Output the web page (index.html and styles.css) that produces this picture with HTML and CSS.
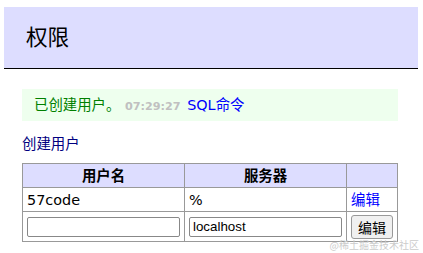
FILE: index.html
```
<!DOCTYPE html>
<html lang="zh">
<head>
    <meta charset="UTF-8">
    <meta name="viewport" content="width=device-width, initial-scale=1.0">
    <title>权限</title>
    <link rel="stylesheet" href="styles.css">
</head>
<body>

<div id="content">
    <h2>权限</h2>

    <div class="message">已创建用户。 <span class="time">07:29:27</span> <a href="#" class="sql">SQL命令</a></div>

    <p class="links"><a href="#" class="visited">创建用户</a></p>

    <form action="" method="get">
        <table>
            <thead>
                <tr>
                    <th>用户名</th>
                    <th>服务器</th>
                    <th></th>
                </tr>
            </thead>
            <tbody>
                <tr>
                    <td>57code</td>
                    <td>%</td>
                    <td><a href="#">编辑</a></td>
                </tr>
                <tr>
                    <td><input type="text" name="user"></td>
                    <td><input type="text" name="host" value="localhost"></td>
                    <td><input type="submit" value="编辑"></td>
                </tr>
            </tbody>
        </table>
    </form>
</div>

<div class="watermark">@稀土掘金技术社区</div>

</body>
</html>
```

FILE: styles.css
```
body {
    margin: 0;
    font: 14.4px/1.25 "DejaVu Sans", Verdana, "Noto Sans CJK SC", sans-serif;
    color: #000;
    background: #fff;
}

a {
    color: blue;
    text-decoration: none;
}

a.visited {
    color: navy;
}

#content {
    padding: 7px 25px 0 22px;
}

h2 {
    font-size: 21.6px;
    font-weight: normal;
    line-height: 27px;
    margin: 0 -20px 20px -18px;
    padding: 17px 22px;
    background: #ddf;
    border-bottom: 1px solid #000;
}

.message {
    padding: 7px 12px;
    background: #efe;
    color: green;
    margin: 0 0 7px 0;
}

.time {
    color: silver;
    font-size: 11.2px;
    font-weight: bold;
    margin-right: 2px;
}

.links {
    margin: 14px 0 10px 0;
}

table {
    border-collapse: collapse;
}

td, th {
    border: 1px solid #999;
    padding: 2.5px 4px;
    text-align: left;
}

thead th {
    background: #ddf;
    text-align: center;
}

input[type="text"] {
    width: 153px;
    height: 20px;
    box-sizing: border-box;
    padding: 1px 3px;
    border: 1px solid #888;
    border-radius: 2px;
    font: 13.33px "Liberation Sans", Arial, sans-serif;
    margin: 0;
}

input[type="submit"] {
    height: 24px;
    padding: 1px 6px;
    margin: 0;
    border: 1px solid #999;
    border-radius: 3px;
    background: #f0f0f0;
    font: 14px "Liberation Sans", "Noto Sans CJK SC", sans-serif;
}

.watermark {
    position: absolute;
    right: 4px;
    bottom: 1px;
    font: 10px "Noto Sans CJK SC", sans-serif;
    color: #ccc;
}
```
